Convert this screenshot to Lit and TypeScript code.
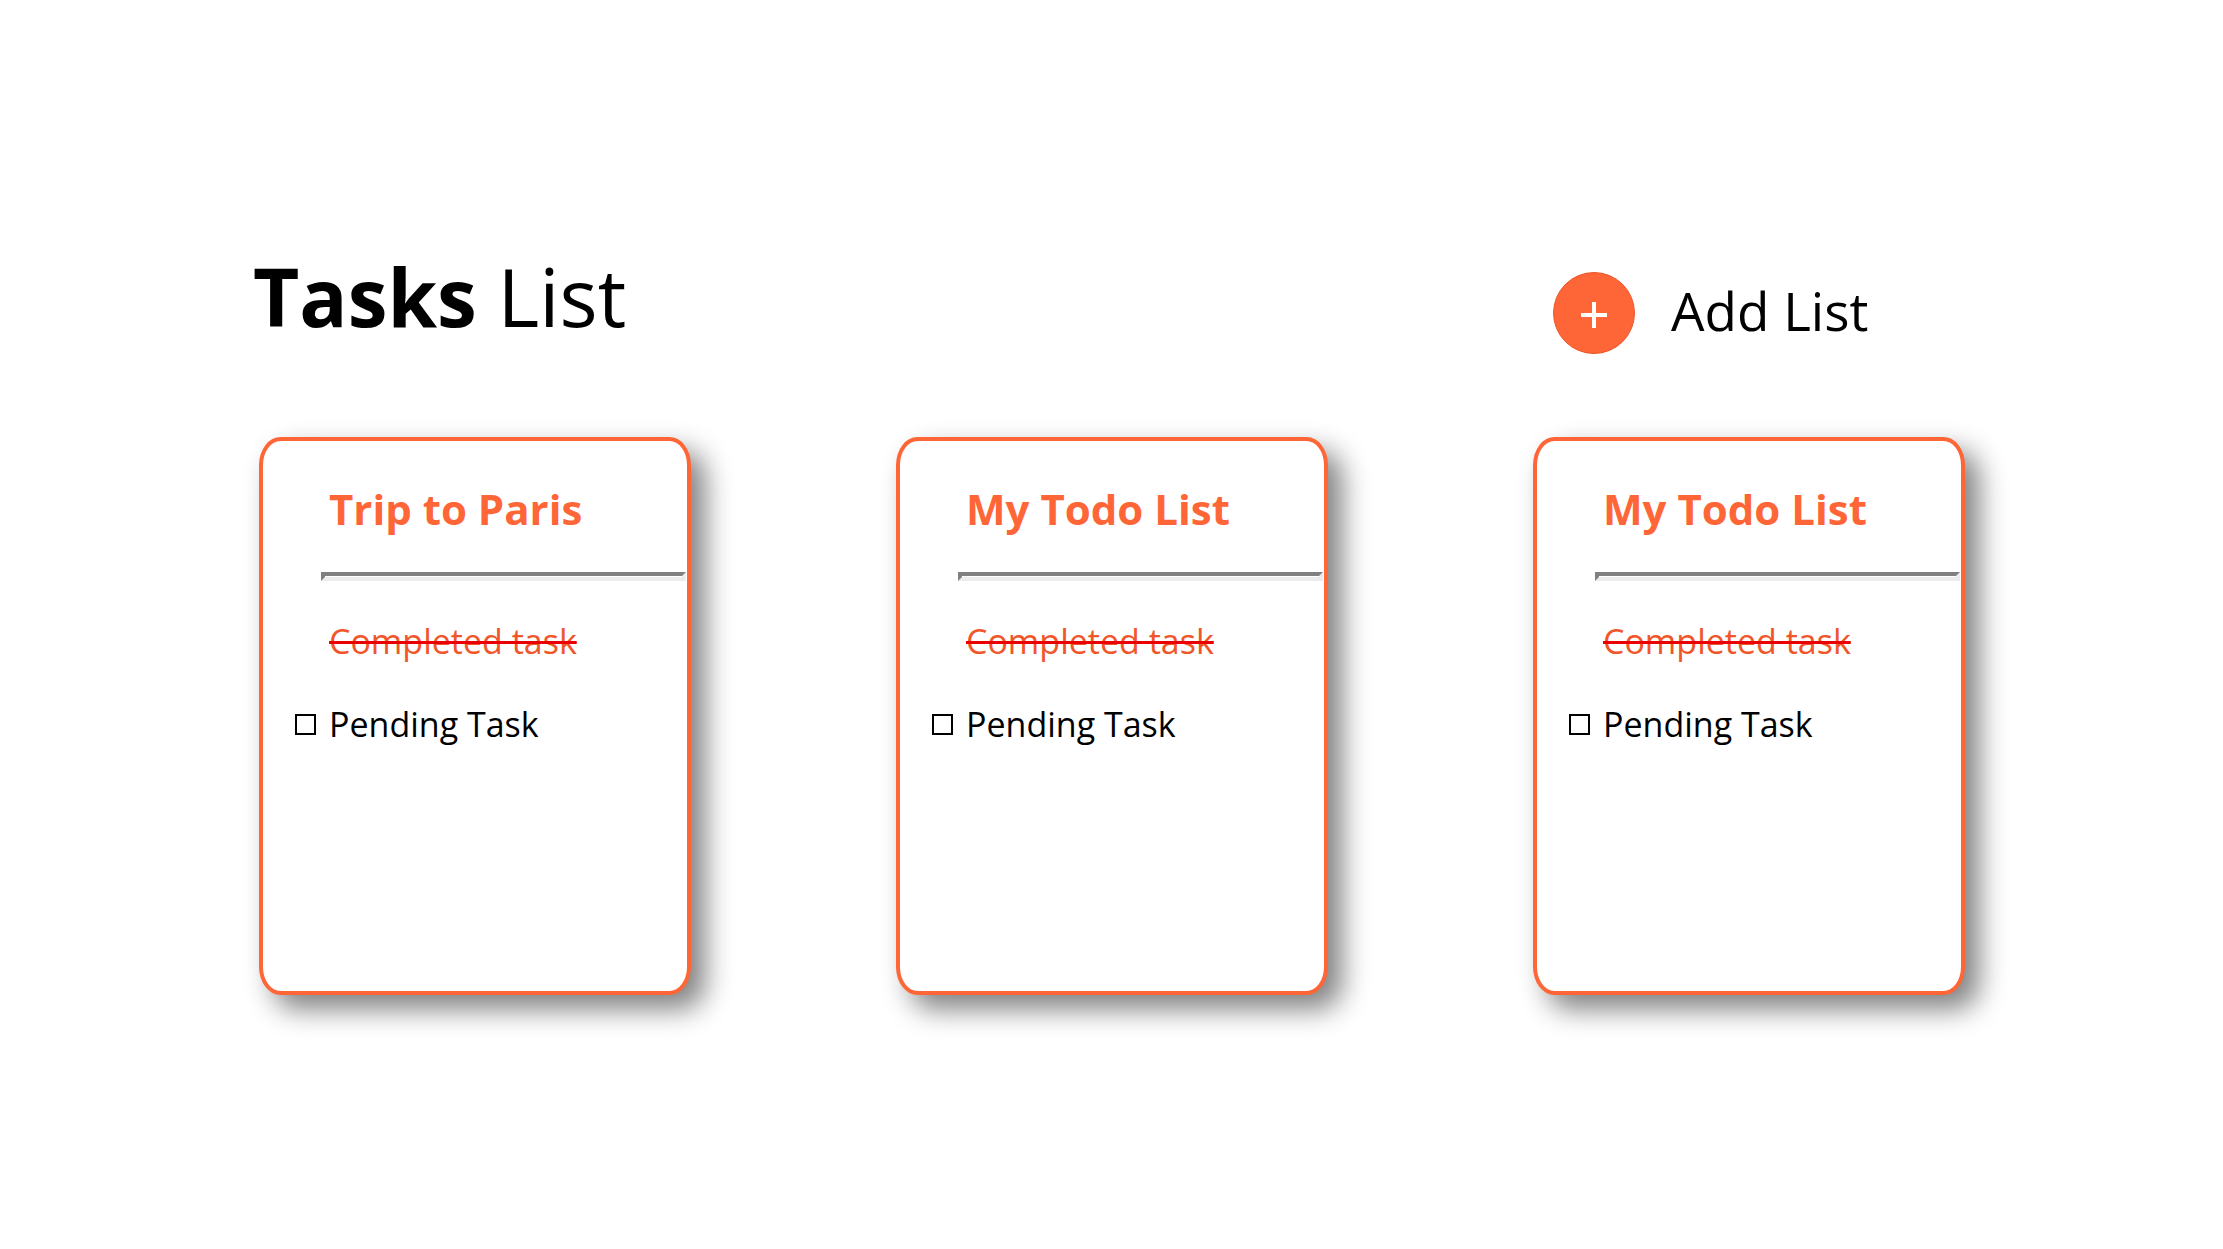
import { LitElement, html, css } from "lit";
import { customElement, property, state } from "lit/decorators.js";

interface Task {
  text: string;
  done: boolean;
}

interface TaskList {
  title: string;
  tasks: Task[];
}

const starterTasks = (): Task[] => [
  { text: "Completed task", done: true },
  { text: "Pending Task", done: false },
];

@customElement("task-card")
export class TaskCard extends LitElement {
  @property({ attribute: false }) list: TaskList = { title: "", tasks: [] };

  static styles = css`
    :host {
      display: block;
      box-sizing: border-box;
      min-height: 558px;
      border: 4px solid #ff6637;
      border-radius: 5%;
      background: #fff;
      box-shadow: 14px 14px 28px #808080;
      padding: 38px 0 24px;
    }
    .title {
      margin: 0;
      padding-left: 66px;
      font-size: 42px;
      line-height: 60px;
      font-weight: 700;
      color: #ff6637;
    }
    .rule {
      height: 1px;
      margin: 33px 1px 30px 58px;
      border: 4px solid;
      border-color: #808080 #ececec #ececec #808080;
    }
    .tasks {
      list-style: none;
      margin: 0;
      padding: 0 0 0 32px;
      display: grid;
      gap: 23px;
    }
    .task {
      display: grid;
      grid-template-columns: 21px 1fr;
      column-gap: 13px;
      align-items: center;
      font-size: 34px;
      line-height: 60px;
      color: #000;
    }
    .box {
      appearance: none;
      width: 21px;
      height: 21px;
      margin: 0;
      border: 2px solid #000;
      background: #fff;
    }
    .box:checked {
      border-color: transparent;
    }
    .done {
      color: #f0562a;
      text-decoration: line-through 3px #ea0000;
      justify-self: start;
    }
  `;

  private toggle(task: Task) {
    task.done = !task.done;
    this.requestUpdate();
  }

  render() {
    return html`
      <h2 class="title">${this.list.title}</h2>
      <hr class="rule" />
      <ul class="tasks">
        ${this.list.tasks.map(
          (task, i) => html`
            <li class="task">
              <input
                class="box"
                type="checkbox"
                id="task-${i}"
                .checked=${task.done}
                @change=${() => this.toggle(task)}
              />
              <label class=${task.done ? "done" : "open"} for="task-${i}">${task.text}</label>
            </li>
          `
        )}
      </ul>
    `;
  }
}

@customElement("app-root")
export class AppRoot extends LitElement {
  @state() private lists: TaskList[] = [
    { title: "Trip to Paris", tasks: starterTasks() },
    { title: "My Todo List", tasks: starterTasks() },
    { title: "My Todo List", tasks: starterTasks() },
  ];

  static styles = css`
    :host {
      display: block;
      box-sizing: border-box;
      min-height: 100vh;
      background: #fff;
      font-family: "Open Sans", "Noto Sans", sans-serif;
      color: #000;
    }
    .page {
      display: grid;
      grid-template-columns: repeat(3, minmax(0, 432px));
      justify-content: space-between;
      row-gap: 81px;
      padding: 236px 258px 120px 259px;
    }
    .header {
      display: grid;
      grid-column: 1 / -1;
      grid-template-columns: subgrid;
      align-items: center;
    }
    .heading {
      grid-column: span 2;
      margin: 0 0 0 -6px;
      font-size: 80px;
      line-height: 120px;
      font-weight: 400;
    }
    .strong {
      font-weight: 700;
    }
    .add {
      display: flex;
      align-items: flex-start;
      gap: 36px;
      margin-top: 34px;
      padding: 0 0 0 20px;
      border: 0;
      background: none;
      font: inherit;
      font-size: 53px;
      line-height: 77px;
      color: inherit;
      white-space: nowrap;
      cursor: pointer;
    }
    .plus {
      flex: none;
      width: 82px;
      height: 82px;
    }
  `;

  private addList() {
    this.lists = [...this.lists, { title: "My Todo List", tasks: starterTasks() }];
  }

  render() {
    return html`
      <main class="page">
        <header class="header">
          <h1 class="heading"><span class="strong">Tasks</span> List</h1>
          <button class="add" type="button" @click=${this.addList}>
            <svg class="plus" viewBox="0 0 82 82" aria-hidden="true">
              <circle cx="41" cy="41" r="40.5" fill="#ff6637" stroke="#ec5427" />
              <path d="M28 43h26M41 30v26" stroke="#fff" stroke-width="4" />
            </svg>
            Add List
          </button>
        </header>
        ${this.lists.map((list) => html`<task-card .list=${list}></task-card>`)}
      </main>
    `;
  }
}
